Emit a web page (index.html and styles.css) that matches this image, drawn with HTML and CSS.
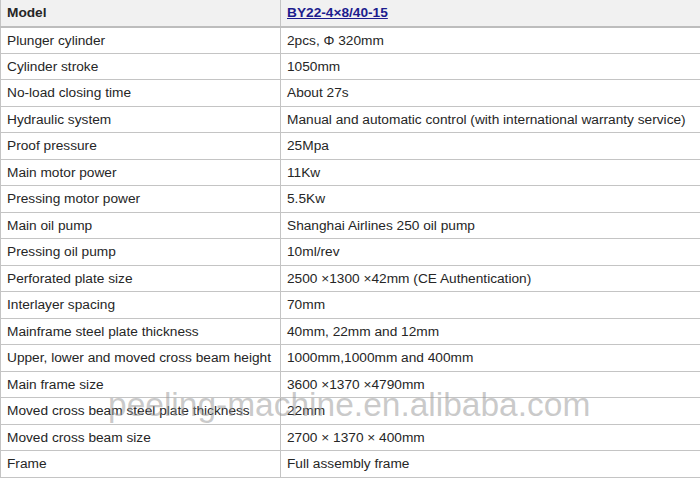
FILE: index.html
```html
<!DOCTYPE html>
<html>
<head>
<meta charset="utf-8">
<link rel="stylesheet" href="styles.css">
</head>
<body>
<div class="wrap">
<table class="spec">
<thead>
<tr><th>Model</th><th><a href="#">BY22-4×8/40-15</a></th></tr>
</thead>
<tbody>
<tr><td>Plunger cylinder</td><td>2pcs, Φ 320mm</td></tr>
<tr><td>Cylinder stroke</td><td>1050mm</td></tr>
<tr><td>No-load closing time</td><td>About 27s</td></tr>
<tr><td>Hydraulic system</td><td>Manual and automatic control (with international warranty service)</td></tr>
<tr><td>Proof pressure</td><td>25Mpa</td></tr>
<tr><td>Main motor power</td><td>11Kw</td></tr>
<tr><td>Pressing motor power</td><td>5.5Kw</td></tr>
<tr><td>Main oil pump</td><td>Shanghai Airlines 250 oil pump</td></tr>
<tr><td>Pressing oil pump</td><td>10ml/rev</td></tr>
<tr><td>Perforated plate size</td><td>2500 ×1300 ×42mm (CE Authentication)</td></tr>
<tr><td>Interlayer spacing</td><td>70mm</td></tr>
<tr><td>Mainframe steel plate thickness</td><td>40mm, 22mm and 12mm</td></tr>
<tr><td>Upper, lower and moved cross beam height</td><td>1000mm,1000mm and 400mm</td></tr>
<tr><td>Main frame size</td><td>3600 ×1370 ×4790mm</td></tr>
<tr><td>Moved cross beam steel plate thickness</td><td>22mm</td></tr>
<tr><td>Moved cross beam size</td><td>2700 × 1370 × 400mm</td></tr>
<tr><td>Frame</td><td>Full assembly frame</td></tr>
</tbody>
</table>
<div class="watermark">peeling-machine.en.alibaba.com</div>
</div>
</body>
</html>
```

FILE: styles.css
```css
html, body {
  margin: 0;
  padding: 0;
  background: #fff;
  overflow: hidden;
}
.wrap {
  position: relative;
  width: 700px;
  height: 478px;
  overflow: hidden;
}
.spec {
  border-collapse: collapse;
  width: 720px;
  font-family: "Liberation Sans", Arial, sans-serif;
  font-size: 13.7px;
  color: #262626;
  border-left: 1px solid #c4c4c4;
}
.spec th, .spec td {
  height: 26.5px;
  padding: 0 6px;
  text-align: left;
  vertical-align: middle;
  border-bottom: 1px solid #c4c4c4;
  box-sizing: border-box;
}
.spec th:first-child, .spec td:first-child {
  width: 280px;
  border-right: 1px solid #c4c4c4;
}
.spec thead th {
  background: #f1f1f1;
  font-weight: bold;
  border-bottom: 2px solid #bdbdbd;
}
.spec thead a {
  color: #1c1c8e;
  text-decoration: underline;
}
.watermark {
  position: absolute;
  left: 108px;
  top: 386px;
  font-family: "Liberation Sans", Arial, sans-serif;
  font-size: 33.5px;
  color: rgba(150, 150, 150, 0.5);
  white-space: nowrap;
  pointer-events: none;
}
```
